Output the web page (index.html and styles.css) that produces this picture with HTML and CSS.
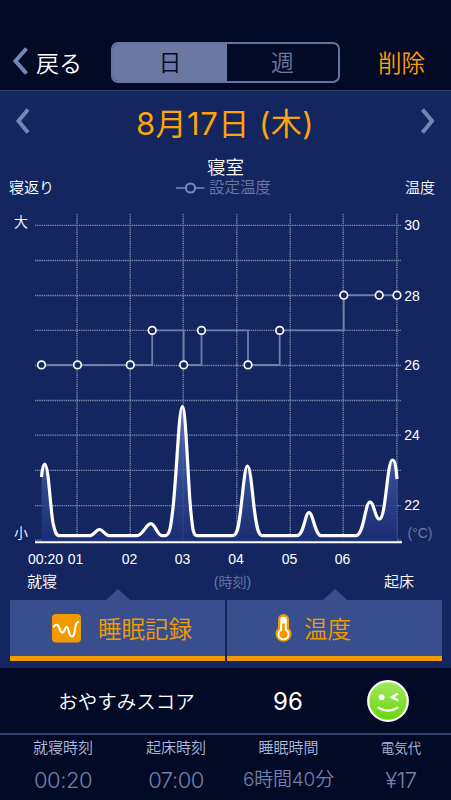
FILE: index.html
```html
<!DOCTYPE html>
<html lang="ja">

<head>
    <meta charset="UTF-8">
    <meta name="viewport" content="width=device-width, initial-scale=1.0">
    <title>睡眠記録</title>
    <link rel="stylesheet" href="styles.css">
</head>

<body>
    <header>
        <a class="back" href="#">
            <svg width="16" height="28" viewBox="0 0 16 28"><path d="M13.5 1.5 2.5 14l11 12.5" /></svg>
            <span>戻る</span>
        </a>
        <div class="segment">
            <button class="active">日</button>
            <button>週</button>
        </div>
        <a class="delete" href="#">削除</a>
    </header>

    <main>
        <div class="date-bar">
            <svg width="15" height="26" viewBox="0 0 15 26"><path d="M13 1.5 3.5 13l9.5 11.5" /></svg>
            <h1>8月17日 (木)</h1>
            <svg width="15" height="26" viewBox="0 0 15 26"><path d="M2.5 1.5 12 13l-9.5 11.5" /></svg>
        </div>

        <div class="chart-head">
            <span class="left">寝返り</span>
            <div class="room">
                <h2>寝室</h2>
                <p>
                    <svg width="30" height="12" viewBox="0 0 30 12"><path d="M0 6h28.5" /><circle cx="14.5" cy="6" r="4.6" /></svg>
                    設定温度
                </p>
            </div>
            <span class="right">温度</span>
        </div>

        <svg class="chart" width="451" height="395" viewBox="0 205 451 395">
            <defs>
                <linearGradient id="fill" gradientUnits="userSpaceOnUse" x1="0" y1="406" x2="0" y2="537">
                    <stop offset="0" stop-color="#6a7ab4" />
                    <stop offset=".5" stop-color="#3c549c" />
                    <stop offset="1" stop-color="#1b3079" />
                </linearGradient>
            </defs>

            <!-- grade -->
            <path class="grid" d="M35 225.3H401M35 260.5H401M35 295.5H401M35 330.3H401M35 365.5H401M35 400.5H401M35 435.2H401M35 470.4H401M35 505.6H401M35 540.2H401" />
            <path class="grid" d="M77 214V541M130.2 214V541M183.2 214V541M236.8 214V541M290.2 214V541M343.2 214V541M396.9 214V541" />

            <!-- 寝返り -->
            <path class="area" d="M41.5 477C42.3 468 43.3 464 44.6 464C48.5 464 50 505 53 523C55 532 56 535.6 59 535.6H90C94 535.6 96 529.5 99.5 529.5S105 535.6 109 535.6H137C143 535.6 146 523.7 150.7 523.7S157 535.6 162 535.6H165C170 535.6 171 525 173 508C177 470 179 406.5 182.3 406.5S187.5 470 190.5 508C192.5 528 193 535.6 197 535.6H233C238 535.6 239 523 241 507C243.5 486 245 466 247.5 466S252 488 254 507C256.5 526 258 535.6 262 535.6H297C304 535.6 305 512.5 309 512.5S315 535.6 321 535.6H356C364 535.6 365 502 370 502C374 502 375 519 379.5 519C386 519 387 460 392.5 460C395 460 396 467 397 479V541H41.5Z" />
            <path class="axis" d="M35 542.2H402" />
            <path class="moves" d="M41.5 477C42.3 468 43.3 464 44.6 464C48.5 464 50 505 53 523C55 532 56 535.6 59 535.6H90C94 535.6 96 529.5 99.5 529.5S105 535.6 109 535.6H137C143 535.6 146 523.7 150.7 523.7S157 535.6 162 535.6H165C170 535.6 171 525 173 508C177 470 179 406.5 182.3 406.5S187.5 470 190.5 508C192.5 528 193 535.6 197 535.6H233C238 535.6 239 523 241 507C243.5 486 245 466 247.5 466S252 488 254 507C256.5 526 258 535.6 262 535.6H297C304 535.6 305 512.5 309 512.5S315 535.6 321 535.6H356C364 535.6 365 502 370 502C374 502 375 519 379.5 519C386 519 387 460 392.5 460C395 460 396 467 397 479" />

            <!-- 設定温度 -->
            <path class="temp" d="M41.5 365H152.2V330.3H183.7V365H201.5V330.3H248V365H279.7V330.3H343.8V295.2H397" />
            <g class="dots">
                <circle cx="41.5" cy="364.9" r="3.8" />
                <circle cx="77.5" cy="364.9" r="3.8" />
                <circle cx="130.3" cy="364.9" r="3.8" />
                <circle cx="152.2" cy="330.4" r="3.8" />
                <circle cx="183.7" cy="364.9" r="3.8" />
                <circle cx="201.5" cy="330.4" r="3.8" />
                <circle cx="248" cy="364.9" r="3.8" />
                <circle cx="279.7" cy="330.4" r="3.8" />
                <circle cx="343.8" cy="295.2" r="3.8" />
                <circle cx="379.2" cy="295.2" r="3.8" />
                <circle cx="397" cy="295.2" r="3.8" />
            </g>

            <g class="labels">
                <text x="21" y="226.5">大</text>
                <text x="21" y="537.5">小</text>
                <text x="412" y="230">30</text>
                <text x="412" y="300.5">28</text>
                <text x="412" y="370">26</text>
                <text x="412" y="440">24</text>
                <text x="412" y="510">22</text>
                <text class="muted" x="420" y="537.5">(°C)</text>
                <text x="45.5" y="564">00:20</text>
                <text x="75.5" y="564">01</text>
                <text x="129.5" y="564">02</text>
                <text x="182.5" y="564">03</text>
                <text x="236" y="564">04</text>
                <text x="289.5" y="564">05</text>
                <text x="342.5" y="564">06</text>
                <text class="jp" x="42" y="587">就寝</text>
                <text class="muted" x="232.5" y="587">(時刻)</text>
                <text class="jp" x="399" y="587">起床</text>
            </g>
        </svg>

        <nav class="tabs">
            <a class="tab" href="#">
                <svg width="29" height="29" viewBox="0 0 29 29">
                    <rect width="29" height="28.5" rx="4" fill="#f29b00" />
                    <path d="M2 12.5C3.5 10 6 10.3 7 13C8.2 16.5 8.3 18.5 10.5 18.5C13 18.5 12.5 13 14.8 13C17.2 13 16 22.5 20 22.5C24.5 22.5 21.5 8 26.3 8" fill="none" stroke="#fff" stroke-width="2.1" stroke-linecap="round" />
                </svg>
                睡眠記録
            </a>
            <a class="tab temperature" href="#">
                <svg width="17" height="29" viewBox="0 0 17 29">
                    <path d="M3 5.5a5.5 5.5 0 0 1 11 0v8.5a8 8 0 1 1-11 0z" fill="#f29b00" />
                    <path d="M5.2 6a3.3 3.3 0 0 1 6.6 0v9.3a6 6 0 1 1-6.6 0z" fill="#fff" />
                    <path d="M7.1 9.5h2.8v6.9a4.2 4.2 0 1 1-2.8 0z" fill="#f29b00" />
                </svg>
                温度
            </a>
        </nav>
    </main>

    <section class="score">
        <span class="score-label">おやすみスコア</span>
        <span class="score-value">96</span>
        <svg width="42" height="42" viewBox="0 0 42 42">
            <defs>
                <linearGradient id="face" x1="0" y1="0" x2="0" y2="1">
                    <stop offset="0" stop-color="#a4e85f" />
                    <stop offset="1" stop-color="#66d60c" />
                </linearGradient>
            </defs>
            <circle cx="21" cy="21" r="19.8" fill="url(#face)" stroke="#fff" stroke-width="2.2" />
            <circle cx="14.6" cy="17.2" r="2.9" fill="#fff" />
            <path d="M30.3 14 24.8 17.2 30.3 20M11.5 27.8Q21 33.5 30.5 27.8" fill="none" stroke="#fff" stroke-width="2.3" stroke-linecap="round" />
        </svg>
    </section>

    <footer>
        <div class="stat">
            <span>就寝時刻</span>
            <strong>00:20</strong>
        </div>
        <div class="stat">
            <span>起床時刻</span>
            <strong>07:00</strong>
        </div>
        <div class="stat duration">
            <span>睡眠時間</span>
            <strong>6時間40分</strong>
        </div>
        <div class="stat cost">
            <span>電気代</span>
            <strong>¥17</strong>
        </div>
    </footer>
</body>

</html>
```
FILE: styles.css
```css
* {
    margin: 0;
    padding: 0;
    box-sizing: border-box;
}

body {
    width: 451px;
    height: 800px;
    overflow: hidden;
    background: #020a26;
    color: #fff;
    font-family: Inter, 'Noto Sans CJK JP', sans-serif;
    font-weight: 350;
}

a {
    color: inherit;
    text-decoration: none;
}

svg {
    display: block;
    flex: none;
}

/* Header */
header {
    display: flex;
    align-items: center;
    height: 91px;
    padding: 34px 26px 0 13px;
    border-bottom: 1px solid #35426b;
}

.back {
    display: flex;
    align-items: center;
    gap: 7px;
    width: 98px;
    font-size: 23px;
}

.back svg {
    margin-top: -3px;
}

.back path,
.date-bar path {
    fill: none;
    stroke: #7486b8;
    stroke-width: 4;
}

.segment {
    display: flex;
    width: 229px;
    height: 41px;
    border: 2px solid #6674a0;
    border-radius: 7px;
    overflow: hidden;
}

.segment button {
    flex: 1;
    padding-top: 1px;
    border: none;
    background: none;
    color: #6b78a3;
    font: inherit;
    font-size: 23px;
    line-height: 36px;
}

.segment .active {
    flex: 0 0 114px;
    background: #6b78a3;
    color: #020a26;
}

.delete {
    margin-left: auto;
    color: #ff9f05;
    font-size: 23.5px;
}

/* Gráfico */
main {
    height: 577px;
    background: #14265f;
}

.date-bar {
    display: flex;
    align-items: center;
    justify-content: space-between;
    height: 60px;
    padding: 0 16px 0 15px;
}

.date-bar h1 {
    color: #ffa30a;
    font-size: 31px;
    font-weight: 400;
    letter-spacing: .5px;
}

.chart-head {
    display: grid;
    grid-template-columns: 167px 95px 1fr;
    align-items: end;
    height: 54px;
    padding: 4px 16px 7px 9px;
    font-size: 15px;
    line-height: 20px;
}

.chart-head .right {
    text-align: right;
}

.room h2 {
    padding-left: 4px;
    font-size: 18.5px;
    font-weight: 350;
    line-height: 21px;
    text-align: center;
}

.room p {
    display: flex;
    align-items: center;
    gap: 3px;
    color: #6a79a7;
    font-size: 15.5px;
    white-space: nowrap;
}

.room p svg {
    fill: none;
    stroke: #5f70a5;
    stroke-width: 2;
}

.room circle {
    fill: #14265f;
    stroke: #7c8bb6;
}

.grid {
    fill: none;
    stroke: #8390b4;
    stroke-width: 1.3;
    stroke-dasharray: 1.3 .9;
}

.area {
    fill: url(#fill);
    opacity: .85;
}

.axis {
    stroke: #fff;
    stroke-width: 2;
}

.moves {
    fill: none;
    stroke: #fff;
    stroke-width: 3.2;
    stroke-linejoin: round;
}

.temp {
    fill: none;
    stroke: #6f7ea9;
    stroke-width: 1.8;
}

.dots {
    fill: #14265f;
    stroke: #fff;
    stroke-width: 1.7;
}

.labels {
    fill: #fff;
    font-family: 'Liberation Sans', 'Noto Sans CJK JP', sans-serif;
    font-size: 14px;
    text-anchor: middle;
}

.labels .jp {
    font-size: 15px;
}

.labels .muted {
    fill: #6a79a7;
}

/* Tabs */
.tabs {
    display: grid;
    grid-template-columns: 215px 215px;
    gap: 2px;
    height: 61px;
    padding-left: 10px;
}

.tab {
    position: relative;
    display: flex;
    align-items: center;
    gap: 17px;
    padding-left: 42px;
    border-bottom: 5px solid #f29b00;
    background: #394f8d;
    color: #f29b00;
    font-size: 23.5px;
}

.tab.temperature {
    gap: 12px;
    padding-left: 48px;
}

.tab::before {
    content: '';
    position: absolute;
    top: -11px;
    left: 50%;
    margin-left: -12px;
    border: 12px solid transparent;
    border-top: none;
    border-bottom: 11px solid #394f8d;
}

/* Score */
.score {
    display: grid;
    grid-template-columns: 253px 70px 1fr;
    align-items: center;
    height: 67px;
    border-bottom: 2px solid #33436f;
}

.score-label {
    font-size: 19.5px;
    text-align: center;
}

.score-value {
    padding-top: 2px;
    font-size: 24px;
    font-weight: 400;
    text-align: center;
}

.score svg {
    margin-left: 43.5px;
}

/* Footer */
footer {
    display: grid;
    grid-template-columns: 126px 100px 125px 100px;
    height: 65px;
}

.stat {
    padding-top: 3px;
    color: #acb8dc;
    font-size: 15px;
    line-height: 20px;
    text-align: center;
    white-space: nowrap;
}

.stat span,
.stat strong {
    display: block;
}

.stat strong {
    padding-top: 8px;
    color: #7180ad;
    font-size: 22px;
    font-weight: 350;
    letter-spacing: -.5px;
    line-height: 28px;
}

.stat.duration strong {
    font-size: 19px;
    letter-spacing: -.2px;
}

.stat.cost span {
    font-size: 13.5px;
}
```
